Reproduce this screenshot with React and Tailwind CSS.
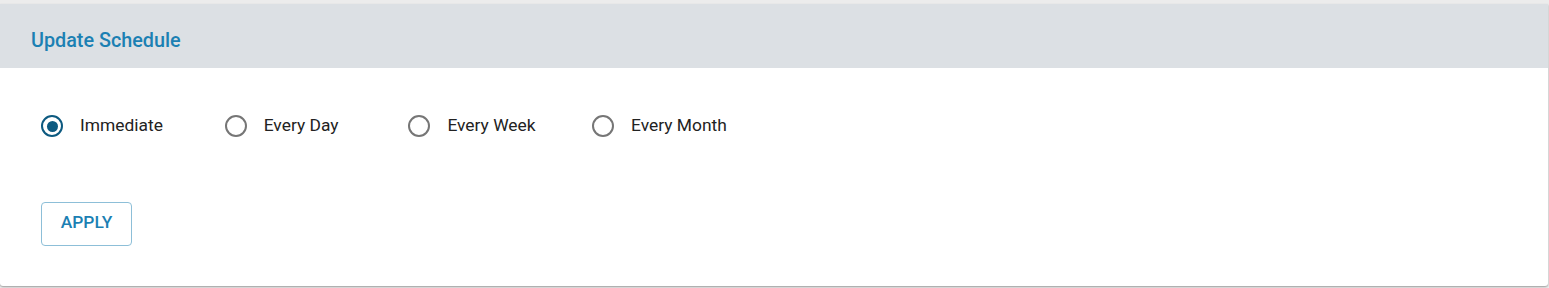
import { useState } from 'react';

const options = ['Immediate', 'Every Day', 'Every Week', 'Every Month'];

function Radio({ label, checked, onSelect }) {
  return (
    <label className="flex w-[183.7px] cursor-pointer items-center" onClick={onSelect}>
      <span
        className={`flex h-[22px] w-[22px] shrink-0 items-center justify-center rounded-full border-[2.5px] ${
          checked ? 'border-[#0d5a80]' : 'border-[#767676]'
        }`}
      >
        {checked && <span className="h-[11px] w-[11px] rounded-full bg-[#0d5a80]" />}
      </span>
      <span className="ml-[17px] pb-[2px] text-[17.4px] text-[#222]">{label}</span>
    </label>
  );
}

export default function App() {
  const [selected, setSelected] = useState('Immediate');

  return (
    <div className="h-[288px] bg-[#ececec] pt-1 pr-[1px]" style={{ fontFamily: 'Roboto, "Liberation Sans", sans-serif' }}>
      <div className="h-[282px] overflow-hidden rounded-b-[3px] bg-white shadow-[0_1px_2px_rgba(0,0,0,0.35)]">
        {/* Header */}
        <div className="flex h-16 items-center bg-[#dce0e4] pl-[31px] pt-[10px]">
          <h2 className="text-[19.8px] font-medium text-[#1b80b3]">Update Schedule</h2>
        </div>

        {/* Options */}
        <div className="mt-[47px] flex h-[22px] items-center pl-[41px]">
          {options.map(opt => (
            <Radio key={opt} label={opt} checked={selected === opt} onSelect={() => setSelected(opt)} />
          ))}
        </div>

        <div className="mt-[65px] pl-[41px]">
          <button
            type="button"
            className="h-[44px] w-[91px] rounded-[4px] border border-[#8dbfd8] pb-[3px] text-[17.4px] font-medium text-[#1b80b3]"
          >
            APPLY
          </button>
        </div>
      </div>
    </div>
  );
}
